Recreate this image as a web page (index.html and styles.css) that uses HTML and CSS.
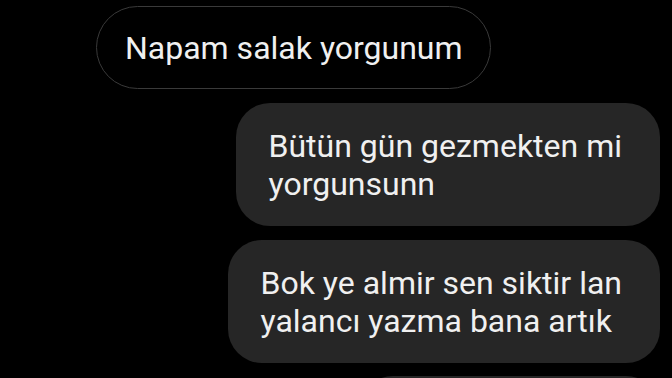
FILE: index.html
```html
<!DOCTYPE html>
<html lang="tr">
  <head>
    <meta charset="UTF-8" />
    <meta name="viewport" content="width=device-width, initial-scale=1.0" />
    <title>Sohbet</title>
    <link rel="stylesheet" href="styles.css">
  </head>
  <body>
    <div class="chat">
      <div class="msg received">Napam salak yorgunum</div>
      <div class="msg sent">Bütün gün gezmekten mi<br />yorgunsunn</div>
      <div class="msg sent">Bok ye almir sen siktir lan<br />yalancı yazma bana artık</div>
      <div class="msg sent next"></div>
    </div>
  </body>
</html>
```

FILE: styles.css
```css
html {
  height: 100%;
  background-color: #000;
}
body {
  margin: 0;
  height: 100%;
  overflow: hidden;
  background-color: #000;
  font-family: Roboto, "Noto Sans", sans-serif;
  color: #f0f0f0;
}
.chat {
  display: flex;
  flex-direction: column;
  gap: 14px;
  padding: 6px 12px 0 96px;
}
.msg {
  font-size: 32px;
  line-height: 38px;
  white-space: nowrap;
}
.received {
  align-self: flex-start;
  padding: 22px 27px 21px 28px;
  border: 1.5px solid #3a3a3a;
  border-radius: 42px;
}
.sent {
  align-self: flex-end;
  padding: 24px 38px 23px 33px;
  background-color: #262626;
  border-radius: 34px;
}
.next {
  width: 230px;
  height: 60px;
  margin-top: -1px;
}
```
